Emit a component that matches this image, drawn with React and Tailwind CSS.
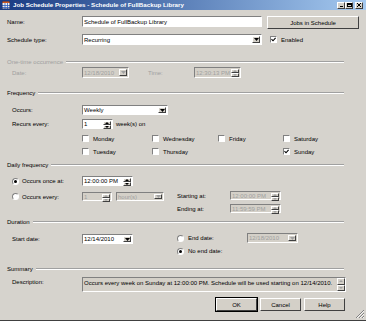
import React from 'react';

// classic win2k look, scaled down to the screenshot size
const sunkenBorder = 'border border-t-[#808080] border-l-[#808080] border-r-white border-b-white';
const raisedBorder = 'border border-t-white border-l-white border-r-[#404040] border-b-[#404040]';

function Arrow({ up, disabled, small }) {
  const w = small ? 4 : 5;
  const h = small ? 2 : 3;
  return (
    <svg width={w} height={h} viewBox={`0 0 ${w} ${h}`} className="block">
      <path d={up ? `M0 ${h}h${w}L${w / 2} 0z` : `M0 0h${w}L${w / 2} ${h}z`} fill={disabled ? '#a0a0a0' : '#000'} />
    </svg>
  );
}

function Raised({ children, className = '' }) {
  return <div className={`flex items-center justify-center bg-[#d4d0c8] ${raisedBorder} ${className}`}>{children}</div>;
}

function Field({ className = '', value, disabled, kind }) {
  return (
    <div className={`flex items-stretch ${sunkenBorder} ${disabled ? 'bg-[#d4d0c8] text-[#a0a0a0]' : 'bg-white text-black'} ${className}`}>
      <div className="flex-1 flex items-center pl-[1px] overflow-hidden whitespace-nowrap">{value}</div>
      {kind === 'drop' && (
        <Raised className="w-[8px] m-[1px]">
          <Arrow disabled={disabled} />
        </Raised>
      )}
      {kind === 'spin' && (
        <div className="flex flex-col w-[8px] m-[1px]">
          <Raised className="flex-1">
            <Arrow up small disabled={disabled} />
          </Raised>
          <Raised className="flex-1">
            <Arrow small disabled={disabled} />
          </Raised>
        </div>
      )}
    </div>
  );
}

function Check({ checked }) {
  return (
    <div className={`w-[7px] h-[7px] shrink-0 bg-white ${sunkenBorder} flex items-center justify-center`}>
      {checked && (
        <svg width="5" height="5" viewBox="0 0 5 5" className="block">
          <path d="M0.5 2.2L2 3.8L4.6 0.8" stroke="#000" strokeWidth="1.1" fill="none" />
        </svg>
      )}
    </div>
  );
}

function Radio({ checked }) {
  return (
    <div className={`w-[7px] h-[7px] shrink-0 rounded-full bg-white ${sunkenBorder} flex items-center justify-center`}>
      {checked && <div className="w-[3px] h-[3px] rounded-full bg-black" />}
    </div>
  );
}

function Group({ title, disabled }) {
  return (
    <div className="flex items-center h-[8px] mr-[15px]">
      <span className={disabled ? 'text-[#a0a0a0]' : ''}>{title}</span>
      <div className="flex-1 ml-[3px] border-t border-t-[#a0a0a0] border-b border-b-white" />
    </div>
  );
}

function Day({ label, checked, className = '' }) {
  return (
    <div className={`flex items-center gap-[4px] ${className}`}>
      <Check checked={checked} />
      <span>{label}</span>
    </div>
  );
}

function Button({ children, isDefault, className = '' }) {
  return (
    <div className={`flex items-center justify-center bg-[#d4d0c8] ${isDefault ? 'outline outline-1 outline-black' : ''} ${raisedBorder} ${className}`}>
      {children}
    </div>
  );
}

function TitleBar() {
  return (
    <div className="h-[10px] flex items-center bg-gradient-to-r from-[#1a3a82] to-[#a6caf0] pl-[2px] pr-[3px]">
      <svg width="8" height="8" viewBox="0 0 8 8" className="block shrink-0">
        <rect x="0" y="0" width="8" height="8" fill="#f0f0f0" />
        <rect x="0" y="0" width="8" height="2" fill="#d05a20" />
        <path d="M0 4.5h8M0 6.5h8M3 2v6M5.5 2v6" stroke="#3060c0" strokeWidth="0.8" />
        <rect x="0.25" y="0.25" width="7.5" height="7.5" fill="none" stroke="#203060" strokeWidth="0.5" />
      </svg>
      <span className="ml-[3px] text-white font-bold text-[6.2px] whitespace-nowrap">
        Job Schedule Properties - Schedule of FullBackup Library
      </span>
      <div className="flex-1" />
      <div className="flex items-center">
        <Raised className="w-[8px] h-[7px]">
          <div className="w-[3px] h-[1px] bg-black mt-[3px]" />
        </Raised>
        <Raised className="w-[8px] h-[7px]">
          <div className="w-[5px] h-[4px] border border-black border-t-2" />
        </Raised>
        <Raised className="w-[8px] h-[7px] ml-[2px]">
          <svg width="4" height="4" viewBox="0 0 4 4" className="block">
            <path d="M0 0L4 4M4 0L0 4" stroke="#000" strokeWidth="1" />
          </svg>
        </Raised>
      </div>
    </div>
  );
}

export default function App() {
  return (
    <div className="relative w-[366px] h-[321px] overflow-hidden bg-[#d6d3cd] border-b border-b-[#404040] text-black text-[6px] leading-none font-['Liberation_Sans',Arial,sans-serif]">
      <TitleBar />

      <div className="pl-[7px] pr-[7px]">
        {/* name */}
        <div className="mt-[6px] flex items-start h-[13px]">
          <div className="w-[75px] h-[11px] flex items-center">Name:</div>
          <Field className="w-[180px] h-[11px]" value="Schedule of FullBackup Library" />
          <Button className="ml-[5px] w-[92px] h-[13px]">Jobs in Schedule</Button>
        </div>

        {/* schedule type */}
        <div className="mt-[5px] flex items-center h-[11px]">
          <div className="w-[75px]">Schedule type:</div>
          <Field className="w-[180px] h-[11px]" value="Recurring" kind="drop" />
          <div className="ml-[8px] flex items-center gap-[4px]">
            <Check checked />
            <span>Enabled</span>
          </div>
        </div>

        {/* one-time */}
        <div className="mt-[13px]">
          <Group title="One-time occurrence" disabled />
        </div>
        <div className="mt-[1px] pl-[5px] flex items-center h-[11px] text-[#a0a0a0]">
          <div className="w-[70px]">Date:</div>
          <Field className="w-[47px] h-[11px]" value="12/18/2010" kind="drop" disabled />
          <div className="ml-[19px] w-[46px]">Time:</div>
          <Field className="w-[47px] h-[11px]" value="12:30:13 PM" kind="spin" disabled />
        </div>

        {/* frequency */}
        <div className="mt-[11px]">
          <Group title="Frequency" />
        </div>
        <div className="mt-[8px] pl-[5px] flex items-center h-[10px]">
          <div className="w-[70px]">Occurs:</div>
          <Field className="w-[86px] h-[10px]" value="Weekly" kind="drop" />
        </div>
        <div className="mt-[4px] pl-[5px] flex items-center h-[10px]">
          <div className="w-[70px]">Recurs every:</div>
          <Field className="w-[31px] h-[10px]" value="1" kind="spin" />
          <span className="ml-[3px]">week(s) on</span>
        </div>
        <div className="mt-[6px] pl-[75px] flex items-center h-[7px]">
          <Day className="w-[70px]" label="Monday" />
          <Day className="w-[66px]" label="Wednesday" />
          <Day className="w-[65px]" label="Friday" />
          <Day label="Saturday" />
        </div>
        <div className="mt-[6px] pl-[75px] flex items-center h-[7px]">
          <Day className="w-[70px]" label="Tuesday" />
          <Day className="w-[131px]" label="Thursday" />
          <Day label="Sunday" checked />
        </div>

        {/* daily frequency */}
        <div className="mt-[6px]">
          <Group title="Daily frequency" />
        </div>
        <div className="mt-[7px] pl-[5px] flex items-start">
          <div className="w-[165px] flex flex-col">
            <div className="flex items-center h-[10px]">
              <div className="w-[70px] flex items-center gap-[3px]">
                <Radio checked />
                <span>Occurs once at:</span>
              </div>
              <Field className="w-[51px] h-[10px]" value="12:00:00 PM" kind="spin" />
            </div>
            <div className="mt-[6px] flex items-center h-[9px]">
              <div className="w-[70px] flex items-center gap-[3px]">
                <Radio />
                <span>Occurs every:</span>
              </div>
              <Field className="w-[30px] h-[9px]" value="1" kind="spin" disabled />
              <Field className="ml-[4px] w-[48px] h-[9px]" value="hour(s)" kind="drop" disabled />
            </div>
          </div>
          <div className="mt-[15px] flex flex-col">
            <div className="flex items-center h-[9px]">
              <div className="w-[53px]">Starting at:</div>
              <Field className="w-[51px] h-[9px]" value="12:00:00 PM" kind="spin" disabled />
            </div>
            <div className="mt-[4px] flex items-center h-[9px]">
              <div className="w-[53px]">Ending at:</div>
              <Field className="w-[51px] h-[9px]" value="11:59:59 PM" kind="spin" disabled />
            </div>
          </div>
        </div>

        {/* duration */}
        <div className="mt-[5px]">
          <Group title="Duration" />
        </div>
        <div className="mt-[7px] pl-[5px] flex items-start">
          <div className="w-[165px] mt-[1px] flex items-center h-[10px]">
            <div className="w-[70px]">Start date:</div>
            <Field className="w-[51px] h-[10px]" value="12/14/2010" kind="drop" />
          </div>
          <div className="flex flex-col">
            <div className="flex items-center h-[10px]">
              <div className="w-[70px] flex items-center gap-[4px]">
                <Radio />
                <span>End date:</span>
              </div>
              <Field className="w-[51px] h-[10px]" value="12/18/2010" kind="drop" disabled />
            </div>
            <div className="mt-[4px] flex items-center gap-[4px] h-[8px]">
              <Radio checked />
              <span>No end date:</span>
            </div>
          </div>
        </div>

        {/* summary */}
        <div className="mt-[10px]">
          <Group title="Summary" />
        </div>
        <div className="mt-[4px] pl-[5px] flex items-start h-[15px]">
          <div className="w-[70px] h-[10px] flex items-center">Description:</div>
          <div className={`w-[264px] h-[15px] flex bg-[#d4d0c8] ${sunkenBorder}`}>
            <div className="flex-1 pl-[1px] pt-[2px] whitespace-nowrap overflow-hidden">
              Occurs every week on Sunday at 12:00:00 PM. Schedule will be used starting on 12/14/2010.
            </div>
            <div className="w-[8px] flex flex-col">
              <Raised className="flex-1">
                <Arrow up small disabled />
              </Raised>
              <Raised className="flex-1">
                <Arrow small disabled />
              </Raised>
            </div>
          </div>
        </div>

        {/* buttons */}
        <div className="mt-[6px] mr-[14px] flex justify-end gap-[3px] h-[13px]">
          <Button isDefault className="w-[41px] h-[13px]">OK</Button>
          <Button className="w-[41px] h-[13px]">Cancel</Button>
          <Button className="w-[41px] h-[13px]">Help</Button>
        </div>
      </div>

      {/* resize grip */}
      <svg width="9" height="9" viewBox="0 0 9 9" className="absolute right-[2px] bottom-[2px] block">
        <path d="M9 1L1 9M9 4L4 9M9 7L7 9" stroke="#808080" strokeWidth="1" />
        <path d="M9 2L2 9M9 5L5 9M9 8L8 9" stroke="#ffffff" strokeWidth="0.8" />
      </svg>
    </div>
  );
}
